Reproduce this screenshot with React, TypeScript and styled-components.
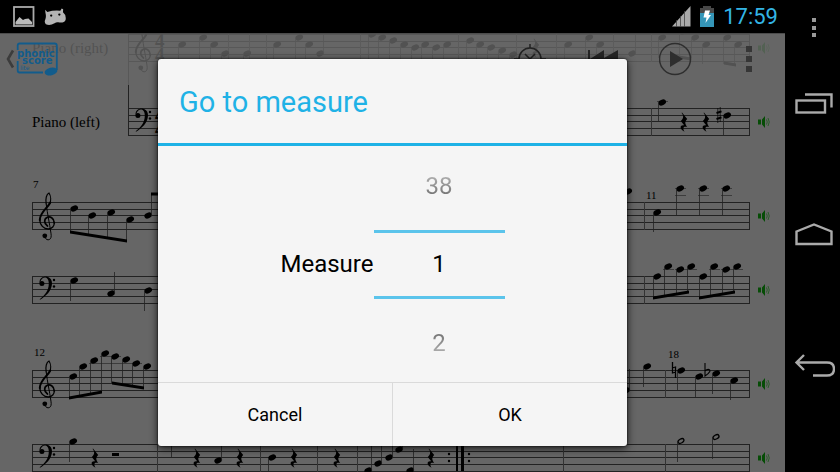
import { useState } from "react";
import styled, { createGlobalStyle } from "styled-components";

const GlobalStyle = createGlobalStyle`
  * {
    box-sizing: border-box;
  }

  body {
    margin: 0;
    background-color: #000;
    font-family: Roboto, "Noto Sans", sans-serif;
  }

  button {
    margin: 0;
    padding: 0;
    border: none;
    background: none;
    color: inherit;
    font: inherit;
    cursor: pointer;
  }

  svg {
    display: block;
  }
`;

const Screen = styled.div`
  display: flex;
  height: 100vh;
  overflow: hidden;
  background-color: #000;
`;

const MainColumn = styled.div`
  flex: 1;
  min-width: 0;
  display: flex;
  flex-direction: column;
`;

const StatusBar = styled.header`
  height: 33px;
  flex: none;
  display: flex;
  align-items: center;
  justify-content: space-between;
  padding: 0 7px 0 13px;
`;

const StatusGroup = styled.div`
  display: flex;
  align-items: center;
  gap: 9px;
`;

const Clock = styled.time`
  color: #33b5e5;
  font-size: 22px;
  line-height: 33px;
`;

const Content = styled.main`
  position: relative;
  flex: 1;
  min-height: 0;
  overflow: hidden;
  background-color: #666;
`;

const Sheet = styled.div`
  display: flex;
  flex-direction: column;
  gap: 20px;
  margin-top: -22px;
`;

const StaffRow = styled.div`
  display: flex;
  align-items: center;
  height: 74px;
  padding-left: 32px;
`;

const StaffName = styled.span`
  width: 96px;
  flex: none;
  color: #000;
  font-family: "Liberation Serif", serif;
  font-size: 15px;
  line-height: 20px;
`;

const StaffSvg = styled.svg`
  flex: 1;
  min-width: 0;
  height: 74px;
  overflow: visible;
`;

const SpeakerButton = styled.button`
  width: 35px;
  height: 32px;
  flex: none;
  padding-left: 7px;
`;

const ActionBar = styled.div`
  position: absolute;
  top: 0;
  left: 0;
  right: 0;
  height: 52px;
  display: flex;
  align-items: center;
  justify-content: space-between;
  background-color: rgba(102, 102, 102, 0.8);
  box-shadow: inset 0 1px #4c4c4c;
`;

const ActionGroup = styled.div`
  display: flex;
`;

const ActionButton = styled.button`
  width: 73px;
  height: 52px;
  display: flex;
  align-items: center;
  justify-content: center;
`;

const HomeButton = styled.button`
  height: 52px;
  padding-left: 5px;
`;

const Overlay = styled.div`
  position: absolute;
  inset: 0;
  display: flex;
  align-items: center;
  justify-content: center;
`;

const Dialog = styled.form`
  width: 100%;
  max-width: 469px;
  background-color: #f5f5f5;
  border-radius: 3px;
  box-shadow: 0 2px 8px rgba(0, 0, 0, 0.8), 0 0 2px #000;
  overflow: hidden;
`;

const DialogTitle = styled.h1`
  margin: 0;
  padding: 2px 21px 0;
  border-bottom: 3px solid #1fb2e6;
  color: #1fb2e6;
  font-size: 29px;
  font-weight: 400;
  line-height: 82px;
`;

const DialogBody = styled.div`
  display: flex;
  align-items: center;
  justify-content: center;
  height: 236px;
`;

const MeasureLabel = styled.label`
  color: #000;
  font-size: 24px;
  line-height: 32px;
`;

const Picker = styled.div`
  width: 131px;
  display: flex;
  flex-direction: column;
`;

const PickerStep = styled.button<{ $fade: "up" | "down" }>`
  height: 83px;
  padding: ${({ $fade }) => ($fade === "up" ? "0 0 4px" : "6px 0 0")};
  font-size: 24px;
  line-height: 32px;

  span {
    background: linear-gradient(
      ${({ $fade }) => ($fade === "up" ? "#bbb, #666" : "#666, #bbb")}
    );
    background-clip: text;
    color: transparent;
  }
`;

const PickerInput = styled.input`
  width: 100%;
  height: 69px;
  padding: 0;
  border: solid #5bc4eb;
  border-width: 3px 0;
  border-radius: 0;
  outline: none;
  background: none;
  color: #000;
  font: inherit;
  font-size: 24px;
  text-align: center;
`;

const DialogFooter = styled.div`
  display: flex;
  border-top: 1px solid #dadada;
`;

const FooterButton = styled.button`
  flex: 1;
  height: 63px;
  color: #000;
  font-size: 18px;

  & + & {
    border-left: 1px solid #dadada;
  }
`;

const NavBar = styled.nav`
  width: 55px;
  flex: none;
  display: grid;
  grid-template-rows: 38px 1fr 1fr 1fr 40px;
`;

const NavButton = styled.button`
  display: flex;
  align-items: center;
  justify-content: center;
  padding-left: 3px;
`;

const MenuButton = styled(NavButton)`
  align-items: flex-end;
`;

/* ---- score ---- */

// x, y from the top staff line, end of the stem
type Note = [x: number, y: number, stem?: number];
type Beam = [x1: number, y1: number, x2: number, y2: number];

interface StaffData {
  clef: "treble" | "bass";
  name?: string;
  start: number;
  joined?: "down" | "up";
  time?: boolean;
  numbers?: [number, number, string][];
  notes: Note[];
  halves?: Note[];
  beams?: Beam[];
  ledgers?: [number, number][];
  rests?: number[];
  bars?: number[];
  sharps?: [number, number][];
  naturals?: [number, number][];
  flats?: [number, number][];
  repeat?: number;
  halfRest?: number;
}

const systems: StaffData[][] = [
  [
    {
      clef: "treble",
      name: "Piano (right)",
      start: 128,
      joined: "down",
      time: true,
      notes: [
        [182, 10, 30], [203, 3, 30], [214, 10, 30], [225, 19, 30],
        [247, 19, 30], [277, 10, 30], [299, 3, 30], [309, 10, 30],
        [320, 19, -2], [372, 0, 30], [382, 3, 24], [393, 6, 27],
        [404, 10, 28], [415, 13, 30], [425, 10, 30], [436, 13, 30],
        [447, 10, 30], [470, 6, 28], [480, 10, 28], [491, 13, 30],
        [502, 16, 30], [513, 20, 30], [568, 10, 30], [589, 3, 26],
        [600, 10, 28], [632, 19, 0], [662, 3, 24], [683, -3, 22],
        [695, 3, 24], [706, 10, 30], [727, 3, 30], [738, 10, 32],
      ],
      beams: [[673, 22, 691, 25], [724, 29, 736, 31]],
      rests: [536],
      bars: [229, 250, 267, 361, 459, 517, 557, 614, 652],
    },
    {
      clef: "bass",
      name: "Piano (left)",
      start: 128,
      joined: "up",
      time: true,
      notes: [[662, -6, 14], [727, 7, 27]],
      ledgers: [[662, -7]],
      rests: [684, 706],
      bars: [652],
      sharps: [[719, 7]],
    },
  ],
  [
    {
      clef: "treble",
      start: 32,
      numbers: [[33, -14, "7"], [646, -3, "11"]],
      notes: [
        [74, 6, 30], [92, 13, 32], [111, 10, 35], [130, 17, 38],
        [148, 13, -8], [628, -11, 6], [657, 10, 30], [680, -14, 13],
        [703, -14, 13], [726, -14, 13],
      ],
      beams: [[70, 30, 127, 39], [151, -8, 170, -8]],
      ledgers: [[680, -14], [680, -7], [703, -14], [703, -7], [726, -14], [726, -7]],
      bars: [645],
    },
    {
      clef: "bass",
      start: 32,
      notes: [
        [74, 4, 25], [111, 17, -4], [148, 14, 35],
        [657, 0, 22], [668, -10, 20], [680, -7, 18], [691, -10, 16],
        [703, 0, 22], [714, -10, 20], [726, -7, 18], [737, -10, 16],
      ],
      beams: [[653, 22, 689, 16], [699, 22, 735, 16]],
      ledgers: [[668, -7], [680, -7], [691, -7], [714, -7], [726, -7], [737, -7]],
      bars: [645],
    },
  ],
  [
    {
      clef: "treble",
      start: 32,
      numbers: [[34, -14, "12"], [668, -12, "18"]],
      notes: [
        [73, 6, 28], [83, -4, 26], [94, -10, 24], [105, -17, 22],
        [115, -14, 13], [126, -11, 15], [136, -7, 16], [147, -4, 18],
        [626, 20, -1], [647, -4, 17], [681, 0, 21], [699, 6, 27],
        [716, 3, 24], [734, 10, 30],
      ],
      beams: [[69, 28, 102, 22], [112, 13, 144, 18]],
      ledgers: [[94, -7], [105, -7], [105, -14], [115, -7], [115, -14], [126, -7], [136, -7]],
      bars: [666],
      naturals: [[674, 0]],
      flats: [[707, 3]],
    },
    {
      clef: "bass",
      start: 32,
      notes: [
        [73, -3, 18], [175, -7, 14], [218, 16, -4], [272, 13, 35],
        [368, 26, 2], [378, 19, 0], [389, 13, -4], [399, 5, -6],
        [410, 26, 5],
      ],
      halves: [[681, -3, 18], [716, -7, 15]],
      rests: [95, 197, 240, 294, 337, 431],
      bars: [158, 261, 318, 358, 564, 666],
      repeat: 457,
      halfRest: 112,
    },
  ],
];

const STAFF_TOP = 23;

function TrebleClef({ x }: { x: number }) {
  return (
    <g transform={`translate(${x} 0)`} fill="none" stroke="#000" strokeLinecap="round">
      <path d="M-1 34C-1.5 39 5.5 39.5 5.2 33.5C5 29 1 10 .2 2" strokeWidth="1" />
      <path d="M.2 2C-.8-3 .5-8 3-9C5-6 5.2-1 3.5 2.5" strokeWidth="1.2" />
      <path d="M4.2 .5C1.5 6.5-6 10-6.2 18" strokeWidth="2" />
      <path d="M-6.2 17C-6.5 23-2 27.2 2.5 27C6 26.8 8.5 24 8.3 20.5" strokeWidth="1.3" />
      <path d="M8.3 21C8 16 4 14 1 15.5C-2 17-2.3 21.5 1.5 24" strokeWidth="1.7" />
      <circle cx="-1.2" cy="33.8" r="2.4" fill="#000" stroke="none" />
    </g>
  );
}

function BassClef({ x }: { x: number }) {
  return (
    <g transform={`translate(${x} 0)`} fill="#000">
      <circle cx="-3.1" cy="7.4" r="2.5" />
      <path d="M-5.5 6.5C-5.5-1.2 6.8-1.8 7 7.3C7 15 .5 20.5-5 23.8L-5.3 23.2C-.5 19.5 3.8 15 3.8 7.5C3.8-.5-3.4-.2-4.7 6.2Z" />
      <circle cx="9" cy="4" r="1.2" />
      <circle cx="9" cy="10.5" r="1.2" />
    </g>
  );
}

function Rest({ x }: { x: number }) {
  return (
    <path
      transform={`translate(${x} 14)`}
      d="M-2-9.5L3.2-3C.5 0 .8 1.500 3.3 5.2C0 3.8-2 5.5 .6 9.8C-4.5 7-4.8 2.500 .2 3.3L-3.2-1C-.2-4-.2-6-2.4-9Z"
    />
  );
}

function NoteHead({ note, hollow }: { note: Note; hollow?: boolean }) {
  const [x, y, stem] = note;
  return (
    <>
      {hollow ? (
        <ellipse
          cx={x}
          cy={y}
          rx="3.2"
          ry="2"
          transform={`rotate(-28 ${x} ${y})`}
          fill="none"
          stroke="#000"
          strokeWidth="1.3"
        />
      ) : (
        <ellipse cx={x} cy={y + 0.5} rx="4" ry="2.8" transform={`rotate(-24 ${x} ${y})`} />
      )}
      {stem !== undefined && (
        <path
          d={`M${stem > y ? x - 3.5 : x + 3.5} ${y + 1}V${stem}`}
          stroke="#222"
          strokeWidth=".8"
        />
      )}
    </>
  );
}

function Staff({ data }: { data: StaffData }) {
  const Clef = data.clef === "treble" ? TrebleClef : BassClef;
  const top = data.joined === "up" ? -STAFF_TOP : 0;
  const bottom = data.joined === "down" ? 50 : 27;

  return (
    <StaffRow>
      {data.name && <StaffName>{data.name}</StaffName>}
      <StaffSvg aria-hidden="true">
        <g transform={`translate(0 ${STAFF_TOP})`} stroke="#222" shapeRendering="crispEdges">
          {[0, 7, 13, 20, 27].map((y) => (
            <line key={y} x1="0" x2="100%" y1={y + 0.5} y2={y + 0.5} />
          ))}
        </g>
        <g transform={`translate(${-data.start} ${STAFF_TOP})`}>
          <g stroke="#222" shapeRendering="crispEdges">
            <path d={`M${data.start + 0.5} ${top}V${bottom + 1}M749.5 0V28`} />
            {data.bars?.map((x) => (
              <path key={x} d={`M${x - 0.5} 0V28`} stroke="#333" />
            ))}
            {data.ledgers?.map(([x, y]) => (
              <path key={`${x} ${y}`} d={`M${x - 5} ${y + 0.5}h11`} stroke="#3c3c3c" />
            ))}
          </g>
          <Clef x={data.start + (data.clef === "treble" ? 14 : 13)} />
          {data.time && (
            <g fontFamily="Liberation Serif, serif" fontWeight="700" fontSize="19">
              <text x={data.start + 27} y="13">4</text>
              <text x={data.start + 27} y="27">4</text>
            </g>
          )}
          {data.numbers?.map(([x, y, text]) => (
            <text key={text} x={x} y={y} fontFamily="Liberation Serif, serif" fontSize="11">
              {text}
            </text>
          ))}
          {data.notes.map((note) => (
            <NoteHead key={note[0]} note={note} />
          ))}
          {data.halves?.map((note) => (
            <NoteHead key={note[0]} note={note} hollow />
          ))}
          {data.beams?.map(([x1, y1, x2, y2]) => (
            <path key={x1} d={`M${x1} ${y1 - 1.5}L${x2} ${y2 - 1.5}v3L${x1} ${y1 + 1.5}Z`} />
          ))}
          {data.rests?.map((x) => (
            <Rest key={x} x={x} />
          ))}
          {data.sharps?.map(([x, y]) => (
            <g key={x} stroke="#000">
              <path d={`M${x - 1.2} ${y - 7}v15M${x + 1.2} ${y - 8}v15`} strokeWidth=".7" />
              <path d={`M${x - 2.5} ${y - 2}l5-1.6M${x - 2.5} ${y + 4}l5-1.6`} strokeWidth="2" />
            </g>
          ))}
          {data.naturals?.map(([x, y]) => (
            <path
              key={x}
              d={`M${x - 1.5} ${y - 8}v11l3.5-1M${x + 1.5} ${y + 8}v-11l-3.5 1`}
              fill="none"
              stroke="#000"
              strokeWidth="1.3"
            />
          ))}
          {data.flats?.map(([x, y]) => (
            <path
              key={x}
              d={`M${x - 2} ${y - 10}v13c5-3 6-6 4-6.5q-2-.5-4 1.5`}
              fill="none"
              stroke="#000"
              strokeWidth="1.1"
            />
          ))}
          {data.halfRest && <rect x={data.halfRest} y="9" width="7" height="3" />}
          {data.repeat && (
            <g transform={`translate(${data.repeat} 0)`}>
              <rect x="-1" y="0" width="2" height="27" />
              <rect x="4" y="0" width="3" height="27" />
              {[10, 17].map((y) => (
                <g key={y}>
                  <circle cx="-8" cy={y} r="1.2" />
                  <circle cx="12" cy={y} r="1.2" />
                </g>
              ))}
            </g>
          )}
        </g>
      </StaffSvg>
      <SpeakerButton type="button" aria-label="Mute staff">
        <svg width="13" height="14" viewBox="0 0 13 14">
          <path d="M1 4.500h3v5H1ZM5 4.500L8 1v12L5 9.500Z" fill="#064d06" />
          <path d="M9.500 4.500q1.500 2.500 0 5M11 3q2.500 4 0 8" fill="none" stroke="#1c5a1c" strokeWidth=".8" />
        </svg>
      </SpeakerButton>
    </StaffRow>
  );
}

/* ---- bars ---- */

function Logo() {
  return (
    <svg width="54" height="36" viewBox="5 41 54 36">
      <path d="M13 50.500L8 59L13 67.500" fill="none" stroke="#3c3c3c" strokeWidth="2.600" />
      <path
        d="M17.700 50V45.500Q17.700 43.500 19.700 43.500H54.500Q56.800 43.500 56.800 45.500V70M17.700 61V70.500Q17.700 72.500 19.700 72.500H43"
        fill="none"
        stroke="#125c8c"
        strokeWidth="1.800"
      />
      <ellipse cx="51" cy="71.500" rx="6.500" ry="3.900" transform="rotate(-14 51 71.500)" fill="#125c8c" />
      <g fill="#125c8c" fontFamily="DejaVu Sans, sans-serif" fontWeight="700">
        <text x="17" y="57" fontSize="10">phonic</text>
        <text x="22" y="64" fontSize="10">score</text>
        <text x="20" y="70" fontSize="6" fontWeight="400">lite</text>
      </g>
    </svg>
  );
}

function StatusIcons() {
  return (
    <StatusGroup>
      <svg width="22" height="21" viewBox="0 0 22 21">
        <rect x="1" y="1" width="19.500" height="19" fill="none" stroke="#aaa" strokeWidth="1.800" />
        <path d="M2.500 18.500V16L6.500 11L10 14L12 13L15.500 12.500L19 16V18.500Z" fill="#bbb" />
      </svg>
      <svg width="23" height="18" viewBox="0 0 24 18">
        <path
          d="M1.500 4.500L1.200 1.500L3.500 3.800Q10 1.800 17 2.500L18.500 0L20 .8L19.800 4Q23.500 7 22.500 12Q21 15.500 15 14.500Q13 14 11 15.500Q6 18.500 2 16.500Q-.2 14.500 1.500 11Q2.500 8 1.500 4.500Z"
          fill="#b4b4b4"
        />
        <circle cx="7.500" cy="7.500" r="1.200" fill="#000" />
        <circle cx="16" cy="6.500" r="1.200" fill="#000" />
      </svg>
    </StatusGroup>
  );
}

function SignalIcons() {
  return (
    <StatusGroup>
      <svg width="19" height="21" viewBox="0 0 19 21">
        <path d="M0 20.500L18.500 0V20.500Z" fill="#aaa" />
        <path d="M4.500 14V21M8.500 10V21M12.500 5V21" stroke="#444" strokeWidth=".8" />
      </svg>
      <svg width="14" height="21" viewBox="0 0 14 21">
        <path d="M3 0H11V2H14V21H0V2H3Z" fill="#484848" />
        <rect y="7" width="14" height="14" fill="#3596b8" />
        <path d="M5 4.500H10L8.500 9H11L5.500 17L6.500 11.500H3.500Z" fill="#fff" />
      </svg>
      <Clock>17:59</Clock>
    </StatusGroup>
  );
}

function Navigation() {
  return (
    <NavBar>
      <MenuButton type="button" aria-label="Menu">
        <svg width="4" height="20" fill="#999">
          <rect y="0" width="4" height="4" />
          <rect y="8" width="4" height="4" />
          <rect y="15" width="4" height="4" />
        </svg>
      </MenuButton>
      <NavButton type="button" aria-label="Recent apps">
        <svg width="38" height="21" fill="none" stroke="#aaa" strokeWidth="2.4">
          <rect x="1.5" y="7.5" width="28.5" height="12" />
          <path d="M10 1.5H36.5V14.5" />
        </svg>
      </NavButton>
      <NavButton type="button" aria-label="Home">
        <svg width="38" height="23" fill="none" stroke="#aaa" strokeWidth="2.4">
          <path d="M1.500 8.500L19 1.500L36.500 8.500V21H1.500Z" />
        </svg>
      </NavButton>
      <NavButton type="button" aria-label="Back">
        <svg width="42" height="24" fill="none" stroke="#aaa" strokeWidth="2.4">
          <path d="M11 1L3.500 8.500L11 16M3.500 8.500H34Q41 8.500 41 15Q41 21.500 34 21.500H20" />
        </svg>
      </NavButton>
    </NavBar>
  );
}

function App() {
  const [measure, setMeasure] = useState(1);
  const total = 38;
  const previous = measure === 1 ? total : measure - 1;
  const next = measure === total ? 1 : measure + 1;

  return (
    <>
      <GlobalStyle />
      <Screen>
        <MainColumn>
          <StatusBar>
            <StatusIcons />
            <SignalIcons />
          </StatusBar>
          <Content>
            <Sheet>
              {systems.map((staves, i) => (
                <div key={i}>
                  {staves.map((staff) => (
                    <Staff key={staff.clef} data={staff} />
                  ))}
                </div>
              ))}
            </Sheet>
            <ActionBar>
              <HomeButton type="button" aria-label="Back to scores">
                <Logo />
              </HomeButton>
              <ActionGroup>
                <ActionButton type="button" aria-label="Go to measure">
                  <svg width="32" height="32" fill="none" stroke="#222" strokeWidth="1.5">
                    <circle cx="16" cy="16" r="11" />
                    <path d="M16 1V5M16 27V31M0 16H5M27 16H32M11 11L21 21M21 11L11 21" />
                  </svg>
                </ActionButton>
                <ActionButton type="button" aria-label="Rewind">
                  <svg width="30" height="18" fill="#262626">
                    <path d="M0 0H2V9L16 0V8L30 0V18L16 10V18L2 9V18H0Z" />
                  </svg>
                </ActionButton>
                <ActionButton type="button" aria-label="Play">
                  <svg width="34" height="34">
                    <circle cx="16" cy="17" r="15.500" fill="none" stroke="#2e2e2e" strokeWidth="1.500" />
                    <path d="M11 9L24 17L11 25Z" fill="#2e2e2e" />
                  </svg>
                </ActionButton>
                <ActionButton type="button" aria-label="More options">
                  <svg width="6" height="26" fill="#363636">
                    <rect y="0" width="6" height="6" />
                    <rect y="10" width="6" height="6" />
                    <rect y="20" width="6" height="6" />
                  </svg>
                </ActionButton>
              </ActionGroup>
            </ActionBar>
            <Overlay>
              <Dialog onSubmit={(e) => e.preventDefault()}>
                <DialogTitle>Go to measure</DialogTitle>
                <DialogBody>
                  <MeasureLabel htmlFor="measure">Measure</MeasureLabel>
                  <Picker>
                    <PickerStep type="button" $fade="up" onClick={() => setMeasure(previous)}>
                      <span>{previous}</span>
                    </PickerStep>
                    <PickerInput
                      id="measure"
                      inputMode="numeric"
                      value={measure}
                      onChange={(e) =>
                        setMeasure(Math.min(total, Math.max(1, Number(e.target.value) || 1)))
                      }
                    />
                    <PickerStep type="button" $fade="down" onClick={() => setMeasure(next)}>
                      <span>{next}</span>
                    </PickerStep>
                  </Picker>
                </DialogBody>
                <DialogFooter>
                  <FooterButton type="button">Cancel</FooterButton>
                  <FooterButton type="submit">OK</FooterButton>
                </DialogFooter>
              </Dialog>
            </Overlay>
          </Content>
        </MainColumn>
        <Navigation />
      </Screen>
    </>
  );
}

export default App;
